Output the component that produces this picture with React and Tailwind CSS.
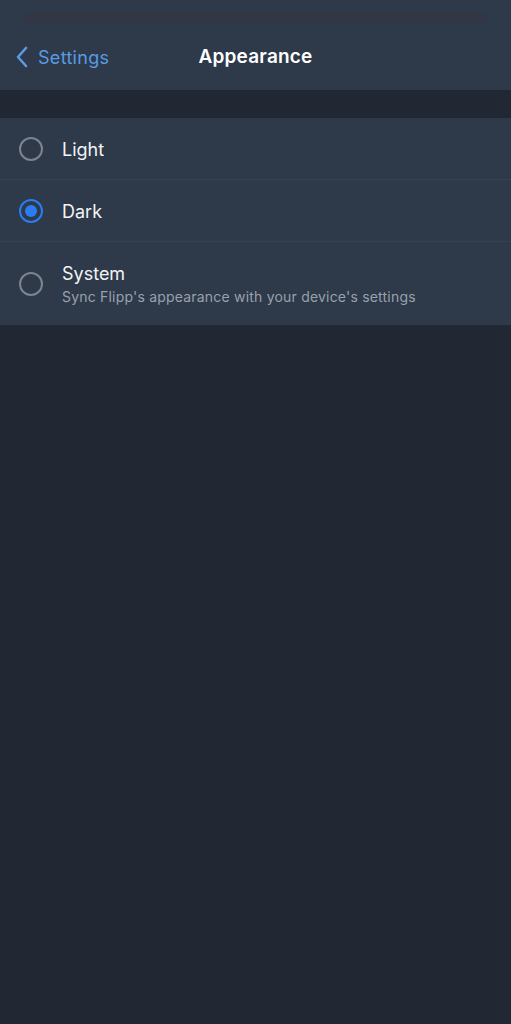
import { useState } from 'react';

const options = [
  { id: 'light', label: 'Light' },
  { id: 'dark', label: 'Dark' },
  { id: 'system', label: 'System', hint: "Sync Flipp's appearance with your device's settings" },
];

function Radio({ checked }) {
  return (
    <div
      className={`w-[24px] h-[24px] rounded-full border-2 flex items-center justify-center shrink-0 ${
        checked ? 'border-[#2b7cf0]' : 'border-[#7d848e]'
      }`}
    >
      {checked && <div className="w-[12px] h-[12px] rounded-full bg-[#2b7cf0]" />}
    </div>
  );
}

export default function App() {
  const [mode, setMode] = useState('dark');

  return (
    <div className="w-[511px] h-[1024px] bg-[#222833] font-['Inter','Liberation_Sans',sans-serif] overflow-hidden">
      <div className="h-[90px] bg-[#2e3949] flex flex-col">
        <div className="mx-[25px] mt-[12px] h-[10px] rounded-full bg-[#333743]" />
        <div className="flex-1 flex items-center relative pt-[2px]">
          <button className="flex items-center gap-[9px] pl-[14px] text-[#5a9be3] text-[18px] tracking-[0.3px]">
            <svg width="15" height="24" viewBox="0 0 15 24" fill="none">
              <path d="M12 3 L4 12 L12 21" stroke="#5a9be3" strokeWidth="2.6" strokeLinecap="round" strokeLinejoin="round" />
            </svg>
            Settings
          </button>
          <h1 className="absolute left-0 right-0 text-center text-white text-[19px] font-semibold tracking-[0.2px] pointer-events-none">
            Appearance
          </h1>
        </div>
      </div>

      <div className="h-[28px]" />

      <ul className="bg-[#2e3949] divide-y divide-[#37424f]">
        {options.map((opt) => (
          <li
            key={opt.id}
            onClick={() => setMode(opt.id)}
            className={`flex items-center gap-[19px] pl-[19px] pr-4 ${opt.hint ? 'h-[83px]' : 'h-[62px]'}`}
          >
            <Radio checked={mode === opt.id} />
            <div className="flex flex-col pt-[2px]">
              <span className="text-[#f2f4f7] text-[18px] leading-[24px]">{opt.label}</span>
              {opt.hint && (
                <span className="text-[#98a1ad] text-[14px] leading-[21px] tracking-[0.2px]">{opt.hint}</span>
              )}
            </div>
          </li>
        ))}
      </ul>
    </div>
  );
}
